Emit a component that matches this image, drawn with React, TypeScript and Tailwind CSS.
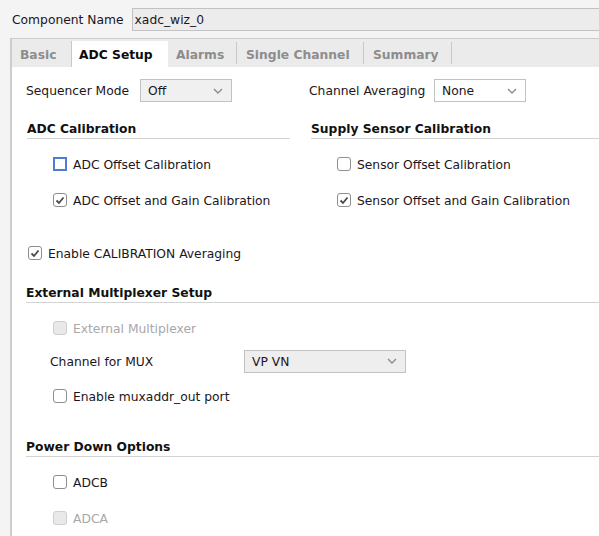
import type { ReactNode } from "react";

type CheckState = "off" | "on" | "focus" | "disabled";

function Chevron() {
  return (
    <svg width="10" height="6" viewBox="0 0 10 6" className="shrink-0">
      <path d="M1 1 L5 5 L9 1" fill="none" stroke="#8c8c8c" strokeWidth="1.4" />
    </svg>
  );
}

function Checkbox({ state }: { state: CheckState }) {
  if (state === "focus") {
    return <span className="box-border block h-[14px] w-[14px] shrink-0 border-2 border-[#4f7bd0] bg-white" />;
  }
  if (state === "disabled") {
    return <span className="box-border block h-[14px] w-[14px] shrink-0 rounded-[3px] border border-[#cfcfcf] bg-[#e9e9e9]" />;
  }
  return (
    <span className="box-border flex h-[14px] w-[14px] shrink-0 items-center justify-center rounded-[3px] border border-[#8e8e8e] bg-white">
      {state === "on" && (
        <svg width="10" height="9" viewBox="0 0 10 9">
          <path d="M1.5 4.5 L4 7 L8.5 1.5" fill="none" stroke="#4a4a4a" strokeWidth="1.8" />
        </svg>
      )}
    </span>
  );
}

function CheckRow({ state, label, indent, height = "h-[36px]" }: { state: CheckState; label: string; indent: string; height?: string }) {
  const textColor = state === "disabled" ? "text-[#a8a8a8]" : "text-[#1c1620]";
  return (
    <div className={`flex items-center gap-[6px] ${height} ${indent}`}>
      <Checkbox state={state} />
      <span className={`pt-[2px] ${textColor}`}>{label}</span>
    </div>
  );
}

function Heading({ children, className = "" }: { children: ReactNode; className?: string }) {
  return (
    <div className={`flex h-[21px] items-center border-b border-[#d3d3d3] pt-[2px] font-bold text-[#111] ${className}`}>
      {children}
    </div>
  );
}

function Select({ value, width, bg }: { value: string; width: string; bg: string }) {
  return (
    <div className={`box-border flex h-[23px] items-center justify-between border border-[#c2c2c2] pl-[7px] pr-[8px] ${width} ${bg}`}>
      <span className="pt-[2px] text-[#1c1620]">{value}</span>
      <Chevron />
    </div>
  );
}

const tabs = [
  { label: "Basic", width: "w-[59px]", active: false, sep: false },
  { label: "ADC Setup", width: "w-[97px]", active: true, sep: false },
  { label: "Alarms", width: "w-[70px]", active: false, sep: true },
  { label: "Single Channel", width: "w-[127px]", active: false, sep: true },
  { label: "Summary", width: "w-[88px]", active: false, sep: true },
];

export default function App() {
  return (
    <div className="h-[536px] w-[599px] overflow-hidden bg-[#f4f4f4] font-['DejaVu_Sans',sans-serif] text-[12.3px] leading-none">
      <div className="flex h-[38px] items-start pt-[8px]">
        <span className="flex h-[22px] items-center pl-[12px] pr-[8px] pt-[2px] text-[#1c1620]">Component Name</span>
        <div className="box-border flex h-[23px] flex-1 items-center border border-r-0 border-[#c2c2c2] bg-[#ececec] pl-[2px] pt-[2px] text-[#1c1620]">
          xadc_wiz_0
        </div>
      </div>

      <div className="ml-[10px] border-l-2 border-t border-[#cdcdcd] bg-white">
        <div className="flex h-[28px] items-end bg-[#ebebeb]">
          {tabs.map((t) =>
            t.active ? (
              <div key={t.label} className={`box-border flex h-[26px] items-center border-l border-[#c8c8c8] bg-white pl-[7px] pt-[2px] font-bold text-[#0c0c0c] ${t.width}`}>
                {t.label}
              </div>
            ) : (
              <div key={t.label} className={`flex h-[26px] items-center ${t.width}`}>
                <span className="flex-1 pl-[8px] pt-[2px] font-bold text-[#8d8d8d]">{t.label}</span>
                {t.sep && <span className="mb-[3px] mr-px h-[22px] w-px bg-[#c8c8c8]" />}
              </div>
            )
          )}
        </div>

        <div className="pl-[14px] pt-[12px]">
          <div className="grid grid-cols-[283px_1fr]">
            <div className="flex h-[23px] items-center">
              <span className="w-[114px] pt-[2px] text-[#1c1620]">Sequencer Mode</span>
              <Select value="Off" width="w-[92px]" bg="bg-[#f0f0f0]" />
            </div>
            <div className="flex h-[23px] items-center">
              <span className="w-[125px] pt-[2px] text-[#1c1620]">Channel Averaging</span>
              <Select value="None" width="w-[92px]" bg="bg-white" />
            </div>
          </div>

          <div className="mt-[16px] grid grid-cols-[263px_1fr] gap-x-[21px] pl-px">
            <div>
              <Heading>ADC Calibration</Heading>
              <div className="mt-[7px]">
                <CheckRow state="focus" label="ADC Offset Calibration" indent="pl-[26px]" />
                <CheckRow state="on" label="ADC Offset and Gain Calibration" indent="pl-[26px]" />
              </div>
            </div>
            <div>
              <Heading>Supply Sensor Calibration</Heading>
              <div className="mt-[7px]">
                <CheckRow state="off" label="Sensor Offset Calibration" indent="pl-[26px]" />
                <CheckRow state="on" label="Sensor Offset and Gain Calibration" indent="pl-[26px]" />
              </div>
            </div>
          </div>

          <div className="mt-[17px]">
            <CheckRow state="on" label="Enable CALIBRATION Averaging" indent="pl-[2px]" />
          </div>

          <Heading className="mt-[11px]">External Multiplexer Setup</Heading>
          <div className="mt-[7px]">
            <CheckRow state="disabled" label="External Multiplexer" indent="pl-[27px]" />
            <div className="flex h-[30px] items-center pl-[24px]">
              <span className="w-[194px] pt-[2px] text-[#1c1620]">Channel for MUX</span>
              <Select value="VP VN" width="w-[162px]" bg="bg-[#eeeeee]" />
            </div>
            <CheckRow state="off" label="Enable muxaddr_out port" indent="pl-[27px]" height="h-[40px]" />
          </div>

          <Heading className="mt-[20px]">Power Down Options</Heading>
          <div className="mt-[7px]">
            <CheckRow state="off" label="ADCB" indent="pl-[27px]" />
            <CheckRow state="disabled" label="ADCA" indent="pl-[27px]" />
          </div>
        </div>
      </div>
    </div>
  );
}
